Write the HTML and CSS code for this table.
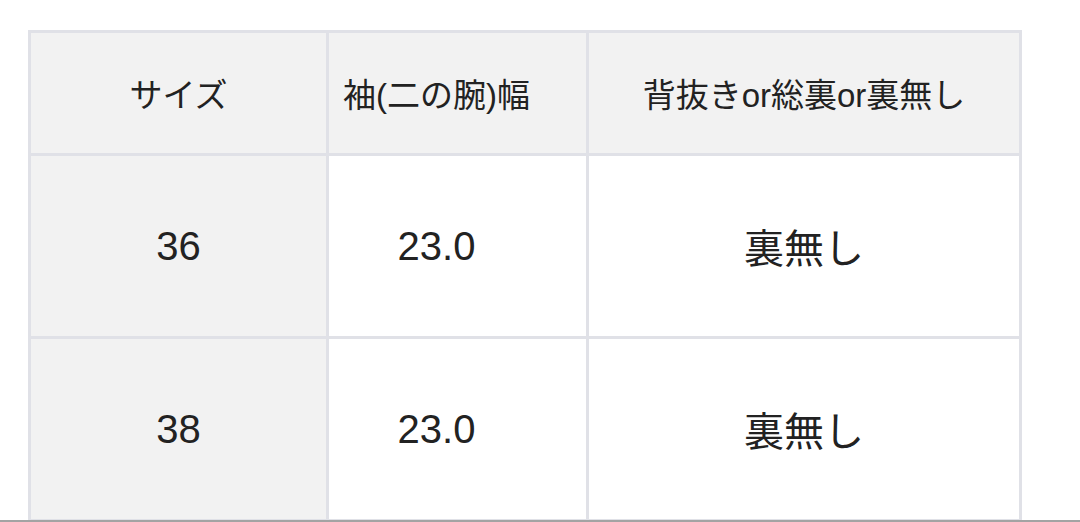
FILE: index.html
```html
<!DOCTYPE html>
<html lang="ja">
<head>
<meta charset="utf-8">
<link rel="stylesheet" href="styles.css">
</head>
<body>
<div class="screen">
  <div class="size-table" role="table">
    <div class="cell head c1" role="columnheader">サイズ</div>
    <div class="cell head c2" role="columnheader">袖(二の腕)幅</div>
    <div class="cell head c3" role="columnheader">背抜きor総裏or裏無し</div>

    <div class="cell side c1" role="rowheader">36</div>
    <div class="cell body c2" role="cell">23.0</div>
    <div class="cell body c3" role="cell">裏無し</div>

    <div class="cell side c1" role="rowheader">38</div>
    <div class="cell body c2" role="cell">23.0</div>
    <div class="cell body c3" role="cell">裏無し</div>
  </div>
</div>
</body>
</html>
```

FILE: styles.css
```css
html, body {
  margin: 0;
  padding: 0;
  background: #ffffff;
}

.screen {
  box-sizing: border-box;
  height: 522px;
  overflow: hidden;
  padding: 30px 0 0 28px;
  border-bottom: 2px solid #a3a3a3;
}

.size-table {
  display: grid;
  grid-template-columns: 298px 260px 433px;
  grid-auto-rows: 183px;
  grid-template-rows: 123px;
  width: 994px;
  box-sizing: border-box;
  border-top: 3px solid #e0e1e7;
  border-left: 3px solid #e0e1e7;
  font-family: "Liberation Sans", "Noto Sans CJK JP", sans-serif;
  color: #222222;
}

.cell {
  box-sizing: border-box;
  display: flex;
  align-items: center;
  justify-content: center;
  border-right: 3px solid #e0e1e7;
  border-bottom: 3px solid #e0e1e7;
  background: #ffffff;
  font-size: 40px;
  white-space: nowrap;
}

.head {
  background: #f2f2f2;
  font-size: 33px;
}

.side {
  background: #f2f2f2;
}

.c2 {
  padding-right: 42px;
}
```
